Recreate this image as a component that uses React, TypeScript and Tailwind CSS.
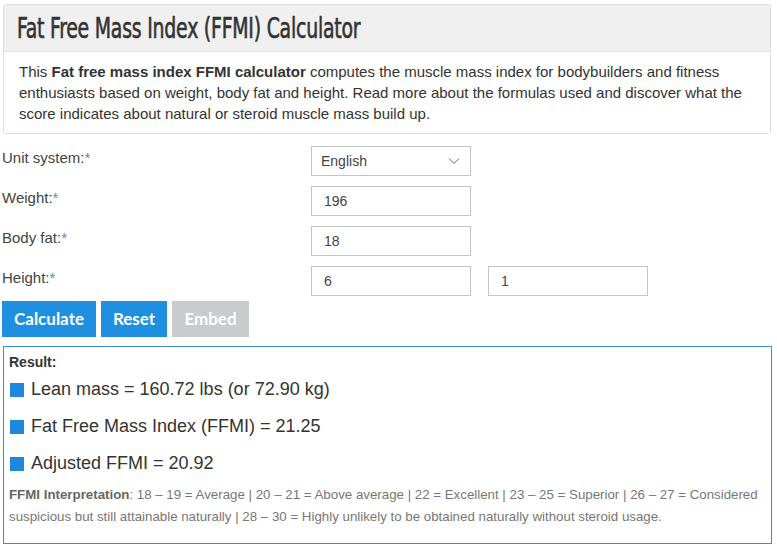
import React from "react";

const Req = () => <span className="text-[#4a90c8]">*</span>;

function Row({ label, children }: { label: string; children: React.ReactNode }) {
  return (
    <div className="flex h-[40px] items-start">
      <div className="w-[311px] pl-[2px] pt-[3px] text-[15px] leading-[18px] text-[#444]">
        {label}
        <Req />
      </div>
      <div className="flex gap-[17px]">{children}</div>
    </div>
  );
}

function Input({ value }: { value: string }) {
  return (
    <div className="flex h-[30px] w-[160px] items-center border border-[#c4c4c4] bg-white pl-[12px] text-[14px] text-[#444]">
      {value}
    </div>
  );
}

export default function App() {
  return (
    <div className="min-h-[551px] w-[777px] bg-white font-['Liberation_Sans',Arial,sans-serif] text-[#333]">
      <div className="h-[4px]" />
      <div className="mx-[3px] w-[768px] overflow-hidden rounded-[3px] border border-[#dedede]">
        <div className="flex h-[46px] items-center bg-[#f0f0f0] pl-[13px] pt-[1px]">
          <h1 className="origin-left whitespace-nowrap font-['DejaVu_Sans_Condensed','Liberation_Sans_Narrow',sans-serif] text-[28px] font-normal leading-[30px] tracking-[-0.3px] text-[#333] [-webkit-text-stroke:0.6px_#333] [transform:scaleX(0.75)]">
            Fat Free Mass Index (FFMI) Calculator
          </h1>
        </div>
        <div className="border-t border-[#e2e2e2] bg-white px-[15px] pb-[9px] pt-[9px] text-[15px] leading-[21px] text-[#333]">
          This <b>Fat free mass index FFMI calculator</b> computes the muscle mass index for bodybuilders and fitness enthusiasts based on weight, body fat and height. Read more about the formulas used and discover what the score indicates about natural or steroid muscle mass build up.
        </div>
      </div>
      <div className="mt-[12px]">
        <Row label="Unit system:">
          <div className="flex h-[30px] w-[160px] items-center justify-between border border-[#c4c4c4] bg-white pl-[9px] pr-[10px] text-[14px] text-[#444]">
            <span>English</span>
            <svg width="12" height="8" viewBox="0 0 12 8" fill="none" stroke="#666" strokeWidth="1">
              <path d="M1 1.5 L6 6.5 L11 1.5" />
            </svg>
          </div>
        </Row>
        <Row label="Weight:">
          <Input value="196" />
        </Row>
        <Row label="Body fat:">
          <Input value="18" />
        </Row>
        <Row label="Height:">
          <Input value="6" />
          <Input value="1" />
        </Row>
      </div>
      <div className="ml-[2px] mt-[-5px] flex gap-[5px] font-['Lato','Open_Sans',sans-serif] text-[17px] font-bold text-white">
        <div className="flex h-[36px] w-[94px] items-center justify-center bg-[#1f8fe0]">Calculate</div>
        <div className="flex h-[36px] w-[66px] items-center justify-center bg-[#1f8fe0]">Reset</div>
        <div className="flex h-[36px] w-[77px] items-center justify-center bg-[#c9cbcd]">Embed</div>
      </div>
      <div className="ml-[3px] mt-[9px] w-[769px] border border-[#3b8ed0] px-[5px] pb-[15px] pt-[6px]">
        <div className="text-[14px] font-bold leading-[18px] text-[#333]">Result:</div>
        <div className="mt-[8px] flex flex-col gap-[16px] text-[18px] leading-[21px] text-[#333]">
          <div className="flex items-center gap-[7px] pl-[1px]">
            <span className="inline-block h-[14px] w-[14px] bg-[#1e88df]" />
            Lean mass = 160.72 lbs (or 72.90 kg)
          </div>
          <div className="flex items-center gap-[7px] pl-[1px]">
            <span className="inline-block h-[14px] w-[14px] bg-[#1e88df]" />
            Fat Free Mass Index (FFMI) = 21.25
          </div>
          <div className="flex items-center gap-[7px] pl-[1px]">
            <span className="inline-block h-[14px] w-[14px] bg-[#1e88df]" />
            Adjusted FFMI = 20.92
          </div>
        </div>
        <div className="mt-[10px] text-[13.3px] leading-[22px] text-[#777]">
          <b className="text-[#666]">FFMI Interpretation</b>: 18 – 19 = Average | 20 – 21 = Above average | 22 = Excellent | 23 – 25 = Superior | 26 – 27 = Considered suspicious but still attainable naturally | 28 – 30 = Highly unlikely to be obtained naturally without steroid usage.
        </div>
      </div>
    </div>
  );
}
